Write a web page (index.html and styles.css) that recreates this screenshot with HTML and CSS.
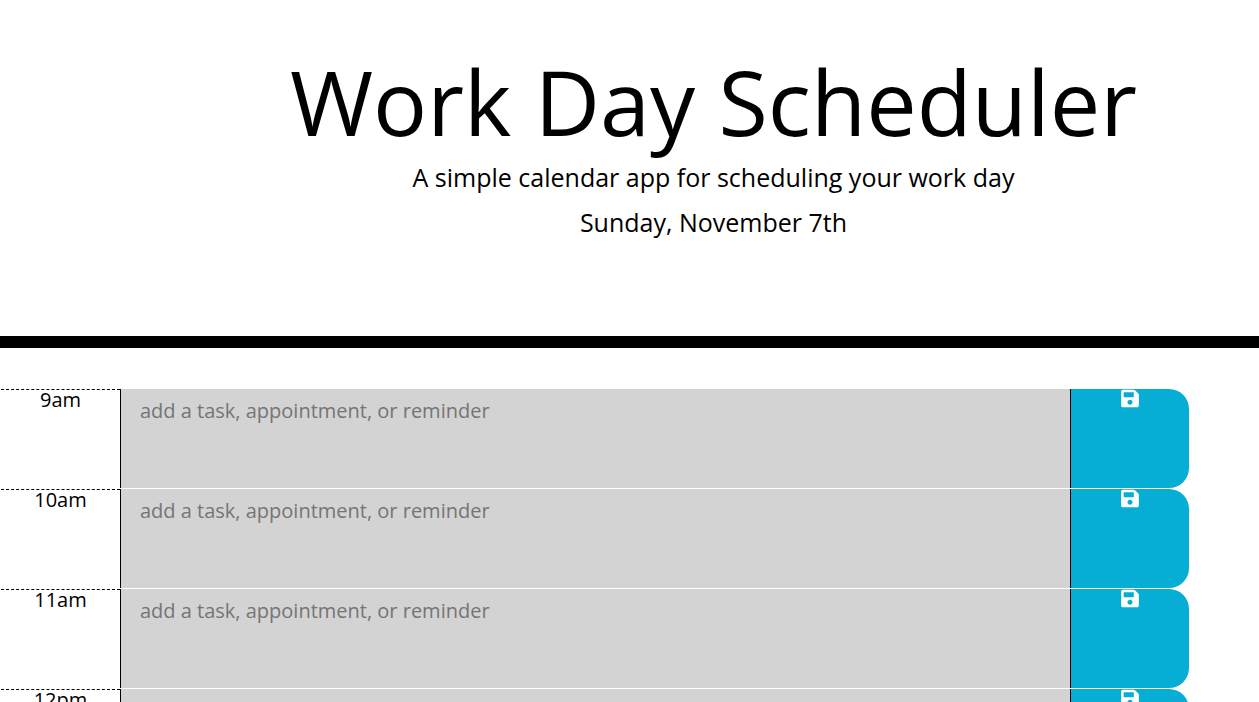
FILE: index.html
```html
<!DOCTYPE html>
<html lang="en">
<head>
<meta charset="utf-8">
<title>Work Day Scheduler</title>
<link rel="stylesheet" href="styles.css">
</head>
<body>
<svg class="sprite" aria-hidden="true"><symbol id="save" viewBox="0 16 448 480"><path d="M433.941 129.941l-83.882-83.882A48 48 0 0 0 316.118 32H48C21.49 32 0 53.49 0 80v352c0 26.51 21.49 48 48 48h352c26.51 0 48-21.49 48-48V163.882a48 48 0 0 0-14.059-33.941zM224 416c-35.346 0-64-28.654-64-64 0-35.346 28.654-64 64-64s64 28.654 64 64c0 35.346-28.654 64-64 64zm96-304.52V212c0 6.627-5.373 12-12 12H76c-6.627 0-12-5.373-12-12V108c0-6.627 5.373-12 12-12h228.52c3.183 0 6.235 1.264 8.485 3.515l3.48 3.48A11.996 11.996 0 0 1 320 111.48z"/></symbol></svg>
<header class="banner">
  <h1 class="title">Work Day Scheduler</h1>
  <p class="lead">A simple calendar app for scheduling your work day</p>
  <p class="lead">Sunday, November 7th</p>
</header>
<main class="schedule">
  <div class="row">
    <label class="hour" for="task-9">9am</label>
    <textarea class="task" id="task-9" placeholder="add a task, appointment, or reminder"></textarea>
    <button class="save" type="button" aria-label="Save 9am"><svg class="icon"><use href="#save"/></svg></button>
  </div>
  <div class="row">
    <label class="hour" for="task-10">10am</label>
    <textarea class="task" id="task-10" placeholder="add a task, appointment, or reminder"></textarea>
    <button class="save" type="button" aria-label="Save 10am"><svg class="icon"><use href="#save"/></svg></button>
  </div>
  <div class="row">
    <label class="hour" for="task-11">11am</label>
    <textarea class="task" id="task-11" placeholder="add a task, appointment, or reminder"></textarea>
    <button class="save" type="button" aria-label="Save 11am"><svg class="icon"><use href="#save"/></svg></button>
  </div>
  <div class="row">
    <label class="hour" for="task-12">12pm</label>
    <textarea class="task" id="task-12" placeholder="add a task, appointment, or reminder"></textarea>
    <button class="save" type="button" aria-label="Save 12pm"><svg class="icon"><use href="#save"/></svg></button>
  </div>
</main>
</body>
</html>
```
FILE: styles.css
```css
* { box-sizing: border-box; }
html { scrollbar-width: none; }
body {
  margin: 0;
  background: #fff;
  color: #000;
  font-family: "Open Sans", sans-serif;
  font-size: 20px;
  line-height: 20px;
}
.sprite { display: none; }
.banner {
  padding: 47px 0 88px 168px;
  border-bottom: 12px solid #000;
  text-align: center;
}
.title {
  margin: 0 0 3px;
  font-size: 90px;
  font-weight: 400;
  line-height: 108px;
}
.lead {
  margin: 0 0 6px;
  font-size: 25px;
  line-height: 39px;
}
.schedule { padding: 41px 70px 0 0; }
.row {
  display: grid;
  grid-template-columns: 120px 1fr 118px;
  height: 100px;
}
.hour {
  margin-left: 1px;
  border-top: 1px dashed #000;
  text-align: center;
}
.task {
  height: 99px;
  margin: 0;
  padding: 7px 19px;
  border: solid #000;
  border-width: 0 1px;
  border-radius: 0;
  background: #d3d3d3;
  color: #000;
  font: inherit;
  line-height: 30px;
  resize: none;
}
.task::placeholder { color: #757575; }
.save {
  display: flex;
  justify-content: center;
  align-items: flex-start;
  height: 99px;
  padding: 0;
  border: 0;
  border-radius: 0 20px 20px 0;
  background: #06aed5;
  color: #fff;
}
.icon {
  width: 18px;
  height: 19px;
  fill: currentColor;
}
```
